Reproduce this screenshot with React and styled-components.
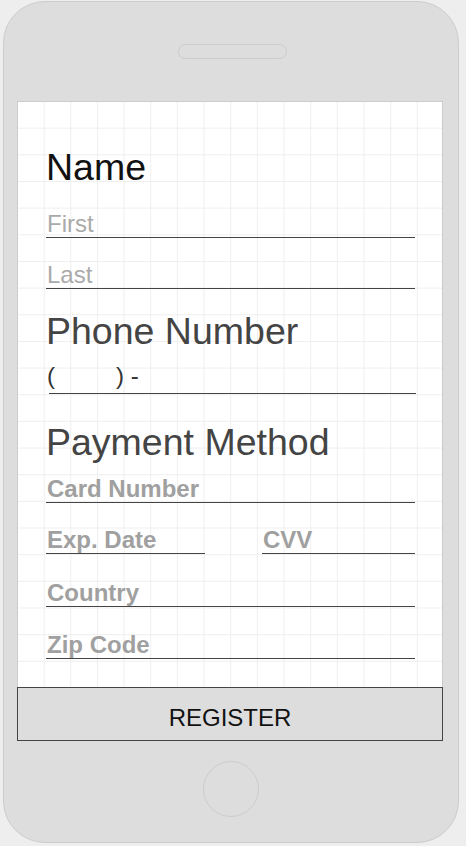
import React from 'react';
import styled, { createGlobalStyle } from 'styled-components';

const GlobalStyle = createGlobalStyle`
  html, body {
    margin: 0;
    padding: 0;
    background: #eeeeee;
    font-family: "Liberation Sans", Arial, Helvetica, sans-serif;
  }
  * { box-sizing: border-box; }
`;

const Phone = styled.div`
  width: 456px;
  height: 842px;
  margin: 1px 0 0 3px;
  background: #dddddd;
  border: 1px solid #cccccc;
  border-radius: 42px;
  display: flex;
  flex-direction: column;
`;

const TopBezel = styled.div`
  height: 99px;
  display: flex;
  align-items: flex-start;
`;

const Speaker = styled.div`
  width: 109px;
  height: 15px;
  margin: 42px 0 0 174px;
  border: 1px solid #cccccc;
  border-radius: 8px;
  background: #dddddd;
`;

const Screen = styled.div`
  width: 426px;
  height: 586px;
  margin-left: 13px;
  background-color: #ffffff;
  border: 1px solid #cccccc;
  border-bottom: none;
  background-image:
    linear-gradient(to right, transparent calc(100% - 1px), #efefef calc(100% - 1px)),
    linear-gradient(to bottom, transparent calc(100% - 1px), #efefef calc(100% - 1px));
  background-size: 26.67px 26.67px;
  padding: 0 27px 0 28px;
  display: flex;
  flex-direction: column;
`;

const Heading = styled.h2`
  margin: ${p => p.$top}px 0 0 0;
  font-size: 37.5px;
  line-height: 42px;
  font-weight: normal;
  color: ${p => p.$color || '#444444'};
`;

const Field = styled.div`
  margin-top: ${p => p.$top || 0}px;
  border-bottom: 1px solid #444444;
  font-size: 24px;
  line-height: 26px;
  padding-left: 1px;
  font-weight: ${p => (p.$bold ? 'bold' : 'normal')};
  color: ${p => (p.$bold ? '#a0a0a0' : '#aaaaaa')};
  white-space: nowrap;
`;

const SplitRow = styled.div`
  margin-top: ${p => p.$top}px;
  display: grid;
  grid-template-columns: 159px 1fr;
  column-gap: 57px;
`;

const PhoneText = styled.div`
  margin-top: 11px;
  font-size: 24px;
  line-height: 26px;
  padding-left: 1px;
  color: #333333;
  white-space: pre;
`;

const AreaCodeGap = styled.span`
  display: inline-block;
  width: 61px;
`;

const PhoneLine = styled.div`
  margin: 4px -1px 0 3px;
  height: 1px;
  background: #444444;
`;

const RegisterButton = styled.button`
  width: 426px;
  height: 54px;
  margin-left: 13px;
  background: #dddddd;
  border: 1px solid #444444;
  padding: 7px 0 0;
  font-family: "Liberation Sans", Arial, Helvetica, sans-serif;
  font-size: 24px;
  line-height: 24px;
  color: #111111;
  text-align: center;
  display: block;
`;

const BottomBezel = styled.div`
  flex: 1;
  display: flex;
  align-items: flex-start;
`;

const HomeButton = styled.div`
  width: 56px;
  height: 56px;
  margin: 20px 0 0 199px;
  border: 1px solid #cccccc;
  border-radius: 50%;
`;

export default function App() {
  return (
    <>
      <GlobalStyle />
      <Phone>
        <TopBezel>
          <Speaker />
        </TopBezel>
        <Screen>
          <Heading $top={44} $color="#111111">Name</Heading>
          <Field $top={23}>First</Field>
          <Field $top={24}>Last</Field>

          <Heading $top={21}>Phone Number</Heading>
          <PhoneText>(<AreaCodeGap />) -</PhoneText>
          <PhoneLine />

          <Heading $top={27}>Payment Method</Heading>
          <Field $top={13} $bold>Card Number</Field>
          <SplitRow $top={24}>
            <Field $bold>Exp. Date</Field>
            <Field $bold>CVV</Field>
          </SplitRow>
          <Field $top={26} $bold>Country</Field>
          <Field $top={25} $bold>Zip Code</Field>
        </Screen>
        <RegisterButton>REGISTER</RegisterButton>
        <BottomBezel>
          <HomeButton />
        </BottomBezel>
      </Phone>
    </>
  );
}
